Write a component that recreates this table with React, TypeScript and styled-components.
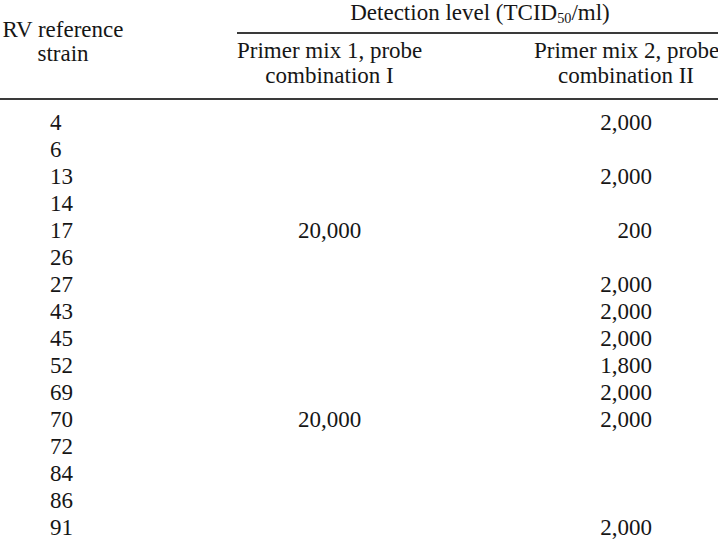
import React from "react";
import styled, { createGlobalStyle } from "styled-components";

const Global = createGlobalStyle`
  html, body { margin: 0; padding: 0; background: #fff; }
  body { overflow: hidden; }
`;

const Page = styled.div`
  width: 718px;
  font-family: "Liberation Serif", "Times New Roman", serif;
  font-size: 23px;
  color: #161616;
`;

const Head = styled.div`
  display: grid;
  grid-template-columns: 237px 185px 296px;
  grid-template-rows: auto auto;
  border-bottom: 2px solid #3a3a3a;
`;

const StubHead = styled.div`
  grid-column: 1;
  grid-row: 1 / 3;
  width: 126px;
  padding-top: 18px;
  line-height: 24px;
  text-align: center;
`;

const SpanHead = styled.div`
  grid-column: 2 / 4;
  grid-row: 1;
  padding: 0 0 7px 5px;
  line-height: 25px;
  text-align: center;
  border-bottom: 2px solid #3a3a3a;
`;

const Sub = styled.sub`
  font-size: 0.62em;
  vertical-align: -0.22em;
  line-height: 0;
`;

const ColHead = styled.div<{ $col: number; $padLeft?: number }>`
  grid-column: ${(p) => p.$col};
  grid-row: 2;
  padding: 4px 0 10px ${(p) => p.$padLeft ?? 0}px;
  line-height: 25px;
  text-align: center;
  white-space: nowrap;
`;

const Body = styled.div`
  padding-top: 9px;
`;

const Row = styled.div`
  display: grid;
  grid-template-columns: 237px 185px 296px;
  height: 27px;
  line-height: 27px;
`;

const Strain = styled.div`
  padding-left: 50px;
`;

const Mix1 = styled.div`
  text-align: center;
`;

const Mix2 = styled.div`
  text-align: right;
  padding-right: 66px;
`;

const rows: [string, string, string][] = [
  ["4", "", "2,000"],
  ["6", "", ""],
  ["13", "", "2,000"],
  ["14", "", ""],
  ["17", "20,000", "200"],
  ["26", "", ""],
  ["27", "", "2,000"],
  ["43", "", "2,000"],
  ["45", "", "2,000"],
  ["52", "", "1,800"],
  ["69", "", "2,000"],
  ["70", "20,000", "2,000"],
  ["72", "", ""],
  ["84", "", ""],
  ["86", "", ""],
  ["91", "", "2,000"],
];

export default function App() {
  return (
    <Page>
      <Global />
      <Head>
        <StubHead>
          RV reference
          <br />
          strain
        </StubHead>
        <SpanHead>
          Detection level (TCID<Sub>50</Sub>/ml)
        </SpanHead>
        <ColHead $col={2}>
          Primer mix 1, probe
          <br />
          combination I
        </ColHead>
        <ColHead $col={3} $padLeft={112}>
          Primer mix 2, probe
          <br />
          combination II
        </ColHead>
      </Head>
      <Body>
        {rows.map(([s, a, b]) => (
          <Row key={s}>
            <Strain>{s}</Strain>
            <Mix1>{a}</Mix1>
            <Mix2>{b}</Mix2>
          </Row>
        ))}
      </Body>
    </Page>
  );
}
